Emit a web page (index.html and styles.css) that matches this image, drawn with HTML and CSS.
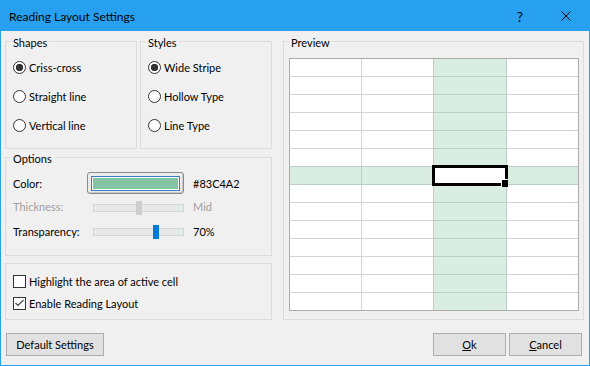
FILE: index.html
```html
<!DOCTYPE html>
<html lang="en">
<head>
    <meta charset="UTF-8" />
    <title>Reading Layout Settings</title>
    <link rel="stylesheet" href="styles.css">
</head>
<body>
<div class="dialog">
    <div class="titlebar">
        <span class="title">Reading Layout Settings</span>
        <span class="caption-btn help">?</span>
        <span class="caption-btn">
            <svg width="10" height="10" viewBox="0 0 10 10"><path d="M0.5 0.5 L9.5 9.5 M9.5 0.5 L0.5 9.5" stroke="#000" stroke-width="1" fill="none"/></svg>
        </span>
    </div>
    <div class="content">
        <div class="main">
            <div class="left">
                <div class="top-row">
                    <fieldset class="group choices">
                        <legend>Shapes</legend>
                        <div class="choice"><span class="radio on"></span>Criss-cross</div>
                        <div class="choice"><span class="radio"></span>Straight line</div>
                        <div class="choice"><span class="radio"></span>Vertical line</div>
                    </fieldset>
                    <fieldset class="group choices">
                        <legend>Styles</legend>
                        <div class="choice"><span class="radio on"></span>Wide Stripe</div>
                        <div class="choice"><span class="radio"></span>Hollow Type</div>
                        <div class="choice"><span class="radio"></span>Line Type</div>
                    </fieldset>
                </div>
                <fieldset class="group options">
                    <legend>Options</legend>
                    <div class="options-grid">
                        <span>Color:</span>
                        <span class="swatch-btn"><span class="swatch"><span></span></span></span>
                        <span class="value">#83C4A2</span>

                        <span class="disabled">Thickness:</span>
                        <span class="slider"><span class="thumb off" style="left: 50%"></span></span>
                        <span class="value disabled">Mid</span>

                        <span>Transparency:</span>
                        <span class="slider"><span class="thumb" style="left: 70%"></span></span>
                        <span class="value">70%</span>
                    </div>
                </fieldset>
                <fieldset class="group checks">
                    <div class="check-row"><span class="checkbox"></span>Highlight the area of active cell</div>
                    <div class="check-row">
                        <span class="checkbox">
                            <svg width="11" height="11" viewBox="0 0 11 11"><polyline points="1.5,5 4,7.5 9.5,2" stroke="#444" stroke-width="1.2" fill="none"/></svg>
                        </span>Enable Reading Layout
                    </div>
                </fieldset>
            </div>
            <fieldset class="group preview">
                <legend>Preview</legend>
                <div class="sheet">
                    <div></div><div></div><div></div><div></div>
                    <div></div><div></div><div></div><div></div>
                    <div></div><div></div><div></div><div></div>
                    <div></div><div></div><div></div><div></div>
                    <div></div><div></div><div></div><div></div>
                    <div></div><div></div><div></div><div></div>
                    <div></div><div></div><div></div><div></div>
                    <div></div><div></div><div></div><div></div>
                    <div></div><div></div><div></div><div></div>
                    <div></div><div></div><div></div><div></div>
                    <div></div><div></div><div></div><div></div>
                    <div></div><div></div><div></div><div></div>
                    <div></div><div></div><div></div><div></div>
                    <div></div><div></div><div></div><div></div>
                    <span class="hl-col"></span>
                    <span class="hl-row"></span>
                    <span class="active-cell"></span>
                </div>
            </fieldset>
        </div>
        <div class="buttons">
            <button class="btn default">Default Settings</button>
            <button class="btn"><u>O</u>k</button>
            <button class="btn"><u>C</u>ancel</button>
        </div>
    </div>
</div>
</body>
</html>
```

FILE: styles.css
```css
* {
    box-sizing: border-box;
}
body {
    margin: 0;
    font-family: Lato, "Noto Sans", sans-serif;
    font-size: 11px;
    color: #000;
}
.dialog {
    width: 590px;
    height: 366px;
    border: 1px solid #28a0f0;
    background: #f0f0f0;
    display: flex;
    flex-direction: column;
}
.titlebar {
    height: 30px;
    flex-shrink: 0;
    background: #28a0f0;
    display: flex;
    align-items: center;
    font-size: 12px;
}
.title {
    flex: 1;
    padding-left: 8px;
}
.caption-btn {
    width: 46px;
    height: 30px;
    display: flex;
    align-items: center;
    justify-content: center;
}
.help {
    font-size: 14px;
}
.content {
    padding: 3px 5px 9px 4px;
}
.main {
    display: flex;
    gap: 11px;
}
.left {
    width: 267px;
    display: flex;
    flex-direction: column;
}
.top-row {
    display: flex;
    gap: 3px;
}

/* group boxes */
.group {
    margin: 0;
    min-width: 0;
    border: 1px solid #dcdcdc;
    padding: 0 0 0 5px;
}
.group legend {
    padding: 4px 2px 0;
    line-height: 10px;
}
.choices {
    width: 132px;
    padding-top: 5px;
    padding-bottom: 8px;
}
.choice {
    height: 29px;
    display: flex;
    align-items: center;
    gap: 3px;
    padding-left: 2px;
}
.radio {
    width: 13px;
    height: 13px;
    flex-shrink: 0;
    border: 1px solid #333;
    border-radius: 50%;
    background: #fff;
}
.radio.on {
    background: radial-gradient(circle, #333 0 3.4px, #fff 4px);
}

/* options */
.options {
    margin-top: 1px;
    padding-top: 8px;
    padding-bottom: 12px;
}
.options-grid {
    display: grid;
    grid-template-columns: 74px 97px auto;
    grid-template-rows: 22px 25px 24px;
    align-items: center;
    padding-left: 2px;
}
.value {
    padding-left: 9px;
}
.disabled {
    color: #a0a0a0;
}
.swatch-btn {
    display: block;
    height: 22px;
    border: 1px solid #8c8c8c;
    border-radius: 3px;
    background: #ececec;
    box-shadow: inset -1px -1px 0 #c8c8c8;
    padding: 3px 3px 2px;
}
.swatch {
    display: block;
    height: 15px;
    border: 1px solid #3d7bbf;
    padding: 1px;
    background: #fff;
}
.swatch span {
    display: block;
    height: 100%;
    background: #83c4a2;
}
.slider {
    position: relative;
    display: block;
    height: 8px;
    margin: 2px 0 0 6px;
    background: #e7eaea;
    border: 1px solid #d6d6d6;
}
.thumb {
    position: absolute;
    top: -4px;
    width: 6px;
    height: 14px;
    margin-left: -3px;
    background: #0078d7;
}
.thumb.off {
    background: #cdcdcd;
}

/* check boxes */
.checks {
    margin-top: 7px;
    padding-top: 6px;
    padding-bottom: 5px;
}
.check-row {
    height: 22px;
    display: flex;
    align-items: center;
    gap: 3px;
    padding-left: 2px;
}
.checkbox {
    width: 13px;
    height: 13px;
    flex-shrink: 0;
    border: 1px solid #333;
    background: #fff;
}
.checkbox svg {
    display: block;
}

/* preview */
.preview {
    width: 301px;
    padding: 10px 4px 8px 5px;
}
.sheet {
    position: relative;
    display: grid;
    grid-template-columns: 71px 71px 72px 71px;
    grid-template-rows: repeat(14, 17px);
    gap: 1px;
    background: #d4d4d4;
    border: 1px solid #ababab;
}
.sheet > div {
    background: #fff;
}
.hl-col {
    position: absolute;
    left: 143px;
    top: 0;
    bottom: 0;
    width: 74px;
    background: rgba(131, 196, 162, 0.3);
}
.hl-row {
    position: absolute;
    left: 0;
    right: 0;
    top: 107px;
    height: 19px;
    background: rgba(131, 196, 162, 0.3);
}
.active-cell {
    position: absolute;
    left: 142px;
    top: 106px;
    width: 76px;
    height: 21px;
    border: 3px solid #000;
    background: #fff;
}
.active-cell::after {
    content: '';
    position: absolute;
    right: -3px;
    bottom: -4px;
    width: 6px;
    height: 7px;
    background: #000;
    border-left: 1px solid #fff;
    border-top: 1px solid #fff;
}

/* buttons */
.buttons {
    display: flex;
    gap: 3px;
    margin-top: 13px;
    padding: 0 2px 0 1px;
}
.btn {
    width: 73px;
    height: 23px;
    padding: 0;
    border: 1px solid #adadad;
    background: #e1e1e1;
    font: inherit;
    color: #000;
}
.btn.default {
    width: 98px;
    margin-right: auto;
}
```
